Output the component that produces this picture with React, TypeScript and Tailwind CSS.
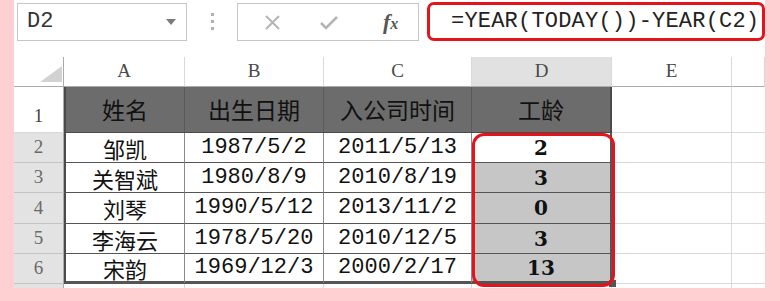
import React from "react"

const cols = ["A", "B", "C", "D", "E", ""]

const rows = [
    { name: "邹凯", birth: "1987/5/2", join: "2011/5/13", age: "2", h: "h-[30px]" },
    { name: "关智斌", birth: "1980/8/9", join: "2010/8/19", age: "3", h: "h-[30px]" },
    { name: "刘琴", birth: "1990/5/12", join: "2013/11/2", age: "0", h: "h-[31px]" },
    { name: "李海云", birth: "1978/5/20", join: "2010/12/5", age: "3", h: "h-[30px]" },
    { name: "宋韵", birth: "1969/12/3", join: "2000/2/17", age: "13", h: "h-[30px]" },
]

const cjk = "font-['Noto_Sans_CJK_SC','Noto_Sans',sans-serif]"
const mono = "font-['Liberation_Mono',monospace]"
const serif = "font-['Liberation_Serif',serif]"

const FormulaBar = () => {
    return <div className="flex items-start h-[57px]">
        <div className="ml-[3px] mt-[3px] w-[170px] h-[38px] border border-[#c6c6c6] flex items-center justify-between pl-[9px] pr-[10px]">
            <span className={`${mono} text-[22px] text-[#333] leading-none`}>D2</span>
            <svg width="10" height="6" viewBox="0 0 10 6"><path d="M0 0 L10 0 L5 6 Z" fill="#7a7a7a" /></svg>
        </div>
        <div className="w-[50px] h-[41px] flex flex-col items-center justify-center gap-[4px] pt-[1px]">
            <div className="w-[3px] h-[3px] bg-[#b0b0b0]"></div>
            <div className="w-[3px] h-[3px] bg-[#b0b0b0]"></div>
            <div className="w-[3px] h-[3px] bg-[#b0b0b0]"></div>
        </div>
        <div className="mt-[3px] w-[182px] h-[38px] border border-[#c6c6c6] flex items-center">
            <svg className="ml-[26px]" width="17" height="17" viewBox="0 0 17 17">
                <path d="M2 2 L15 15 M15 2 L2 15" stroke="#b4b4b4" strokeWidth="2" />
            </svg>
            <svg className="ml-[38px]" width="20" height="17" viewBox="0 0 20 17">
                <path d="M2 9 L7 14 L18 3" stroke="#b4b4b4" strokeWidth="2.6" fill="none" />
            </svg>
            <span className={`ml-[44px] ${serif} italic font-bold text-[22px] text-[#555] leading-none`}>f<span className="text-[16px]">x</span></span>
        </div>
        <div className="ml-[8px] mt-[2px] w-[338px] h-[39px] border-[3px] border-[#e3141b] rounded-[7px] flex items-center pl-[21px]">
            <span className={`${mono} text-[22px] tracking-[0.2px] text-[#222] leading-none whitespace-nowrap`}>=YEAR(TODAY())-YEAR(C2)</span>
        </div>
    </div>
}

const Grid = () => {
    const dataCell = "flex items-center justify-center bg-white border-r border-r-[#8a8a8a] border-b border-b-[#555]"
    return <div className="relative">
        <div className="grid grid-cols-[50px_121px_139px_148px_140px_120px_33px]">
            {/* column headers */}
            <div className="h-[30px] border-r border-b border-[#ababab] flex items-end justify-end pr-[1px] pb-[4px]">
                <svg width="22" height="16" viewBox="0 0 22 16"><path d="M22 0 L22 16 L0 16 Z" fill="#d2d2d2" /></svg>
            </div>
            {cols.map((c, i) => (
                <div key={i} className={`h-[30px] border-b border-b-[#ababab] border-r border-r-[#d9d9d9] flex items-center justify-center ${serif} text-[19px] text-[#4a4a4a] ${c === "D" ? "bg-[#e1e1e1] border-b-[#8a8a8a]" : "bg-white"}`}>
                    {c}
                </div>
            ))}

            {/* row 1 */}
            <div className={`h-[46px] border-r border-r-[#ababab] border-b border-b-[#d9d9d9] bg-white flex items-end justify-center pb-[2px] ${serif} text-[19px] text-[#444]`}>1</div>
            {["姓名", "出生日期", "入公司时间", "工龄"].map((t, i) => (
                <div key={i} className={`h-[46px] bg-[#6c6c6c] border-b border-b-[#4a4a4a] ${i === 0 ? "border-l-[2px] border-l-[#4a4a4a]" : ""} ${i === 3 ? "border-r-[2px] border-r-[#4a4a4a]" : "border-r border-r-[#5a5a5a]"} flex items-center justify-center ${cjk} text-[23px] text-[#111] leading-none`}>
                    {t}
                </div>
            ))}
            <div className="h-[46px] border-r border-b border-[#d9d9d9] bg-white"></div>
            <div className="h-[46px] border-b border-[#d9d9d9] bg-white"></div>

            {rows.map((r, i) => {
                const last = i === rows.length - 1
                const bottom = last ? "border-b-[3px]" : ""
                return <React.Fragment key={i}>
                    <div className={`${r.h} border-r border-r-[#ababab] border-b border-b-[#c4c4c4] bg-[#e3e3e3] flex items-center justify-center ${serif} text-[19px] text-[#6a6a6a]`}>{i + 2}</div>
                    <div className={`${r.h} ${dataCell} ${bottom} border-l-[2px] border-l-[#4a4a4a] ${cjk} text-[22px] text-[#111] leading-none`}>{r.name}</div>
                    <div className={`${r.h} ${dataCell} ${bottom} ${mono} text-[22px] text-[#111] leading-none`}>{r.birth}</div>
                    <div className={`${r.h} ${dataCell} ${bottom} ${mono} text-[22px] text-[#111] leading-none`}>{r.join}</div>
                    <div className={`${r.h} flex items-center justify-center border-r-[2px] border-r-[#555] border-b border-b-[#555] ${bottom} ${i === 0 ? "bg-white" : "bg-[#c6c6c6]"} font-['DejaVu_Serif',serif] font-bold text-[20px] text-[#111] leading-none`}>{r.age}</div>
                    <div className={`${r.h} border-r border-b border-[#d9d9d9] bg-white`}></div>
                    <div className={`${r.h} border-b border-[#d9d9d9] bg-white`}></div>
                </React.Fragment>
            })}
            <div className="h-[4px] border-r border-[#ababab] bg-[#e3e3e3]"></div>
            <div className="h-[4px] border-r border-[#d9d9d9]"></div>
            <div className="h-[4px] border-r border-[#d9d9d9]"></div>
            <div className="h-[4px] border-r border-[#d9d9d9]"></div>
            <div className="h-[4px] border-r border-[#d9d9d9]"></div>
            <div className="h-[4px] border-r border-[#d9d9d9]"></div>
            <div className="h-[4px]"></div>
        </div>
        {/* fill handle */}
        <div className="absolute left-[595px] top-[223px] w-[7px] h-[7px] bg-[#555]"></div>
        {/* red highlight */}
        <div className="absolute left-[458px] top-[76px] w-[143px] h-[154px] border-[3px] border-[#e3141b] rounded-[12px]"></div>
    </div>
}

export default function App() {
    return <div className="w-[780px] h-[301px] bg-[#ffd0d2] pl-[14px] pr-[15px] pb-[13px] overflow-hidden">
        <div className="w-[751px] h-[288px] bg-white overflow-hidden">
            <FormulaBar />
            <Grid />
        </div>
    </div>
}
